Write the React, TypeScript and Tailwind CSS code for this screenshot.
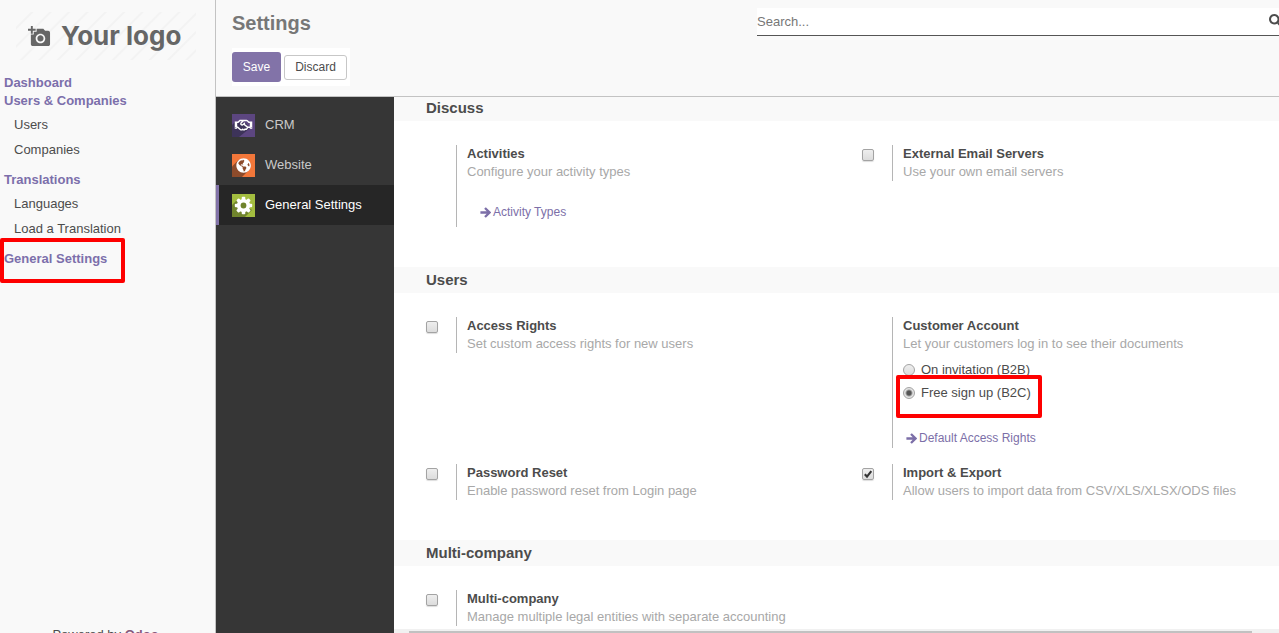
import type { ReactNode } from "react";
import { FaGlobeAmericas, FaRegHandshake, FaSearch } from "react-icons/fa";
import { MdAddAPhoto } from "react-icons/md";

type NavGroup = { title: string; items: string[]; highlighted?: boolean };

const navGroups: NavGroup[] = [
  { title: "Dashboard", items: [] },
  { title: "Users & Companies", items: ["Users", "Companies"] },
  { title: "Translations", items: ["Languages", "Load a Translation"] },
  { title: "General Settings", items: [], highlighted: true },
];

function Sidebar() {
  return (
    <aside className="flex w-[216px] shrink-0 flex-col border-r border-[#c3c3c3] bg-[#f9f9f9]">
      <a
        href="#home"
        className="mt-3 ml-4 flex h-12 w-[180px] items-center gap-[10px] bg-[repeating-linear-gradient(135deg,#f9f9f9_0px,#f9f9f9_10px,#f3f3f3_11px,#f3f3f3_12px,#f9f9f9_13px)] pl-3 text-[#666]"
      >
        <MdAddAPhoto className="size-[23px] shrink-0" />
        <span className="font-[family-name:Inter] text-[26px] leading-none font-bold whitespace-nowrap">
          Your logo
        </span>
      </a>
      <nav className="mt-[14px]">
        {navGroups.map((group) => (
          <section key={group.title}>
            <h2 className="relative pl-1 leading-[18px] font-bold text-[#7c6fab]">
              <a href="#group">{group.title}</a>
              {group.highlighted && (
                <span className="absolute -top-3 left-0 h-[45px] w-[125px] rounded-xs border-4 border-[#fe0000]" />
              )}
            </h2>
            {group.items.length > 0 && (
              <ul className="pt-[2px] pb-[9px]">
                {group.items.map((item) => (
                  <li key={item} className="pl-[14px] leading-[25px]">
                    <a href="#item">{item}</a>
                  </li>
                ))}
              </ul>
            )}
          </section>
        ))}
      </nav>
      <footer className="mt-auto -mb-[11px] pr-1 text-center leading-[18px]">
        Powered by{" "}
        <a href="#odoo" className="font-bold text-[#875a7b]">
          Odoo
        </a>
      </footer>
    </aside>
  );
}

function Header() {
  return (
    <header className="flex h-[97px] shrink-0 border-b border-[#c3c3c3] bg-[#f9f9f9]">
      <div className="w-[541px] shrink-0 pl-4">
        <h1 className="mt-2 text-[20px] leading-[30px] font-bold text-[#777]">Settings</h1>
        <div className="mt-[10px] flex h-[38px] w-[118px] items-center gap-[3px] bg-white text-xs">
          <button type="button" className="h-[30px] w-[49px] shrink-0 rounded-[3px] bg-[#8273a8] text-white">
            Save
          </button>
          <button
            type="button"
            className="h-[25px] w-[63px] shrink-0 rounded-[3px] border border-[#c7c7c7] bg-white text-[#4c4c4c]"
          >
            Discard
          </button>
        </div>
      </div>
      <div className="mt-2 flex h-7 grow overflow-hidden border-b border-[#555] bg-white">
        <input
          type="text"
          aria-label="Search"
          placeholder="Search..."
          className="min-w-0 grow bg-transparent outline-none placeholder:text-[#777]"
        />
        <button type="button" aria-label="Run search" className="-mr-[3px] flex shrink-0 items-center pb-[2px]">
          <FaSearch className="size-[13px]" />
        </button>
      </div>
    </header>
  );
}

function GearIcon() {
  return (
    <svg viewBox="0 0 23 23" className="size-[23px]" aria-hidden="true">
      <rect width="23" height="23" fill="#a3bd3f" />
      <path d="M5 6 0 11v12h13l7-7Z" fill="#70842d" />
      <g fill="#fff">
        {[0, 45, 90, 135].map((angle) => (
          <rect key={angle} x="9.7" y="2.8" width="3.6" height="17.4" rx="1" transform={`rotate(${angle} 11.5 11.5)`} />
        ))}
        <circle cx="11.5" cy="11.5" r="6.6" />
      </g>
      <circle cx="11.5" cy="11.5" r="2.9" fill="#70842d" />
    </svg>
  );
}

function WebsiteIcon() {
  return (
    <svg viewBox="0 0 23 23" className="size-[23px]" aria-hidden="true">
      <rect width="23" height="23" fill="#f2773a" />
      <path d="M6.5 6 0 12.5V23h10l7-7Z" fill="#8d4b2b" />
      <circle cx="11.6" cy="11.6" r="7" fill="#8d4b2b" />
      <FaGlobeAmericas x="4.1" y="4.1" size={15} color="#fff" />
    </svg>
  );
}

function CrmIcon() {
  return (
    <svg viewBox="0 0 23 23" className="size-[23px]" aria-hidden="true">
      <rect width="23" height="23" fill="#5c4680" />
      <path d="M3 8 0 11v12h7l10-8-3-6Z" fill="#3d3359" />
      <FaRegHandshake x="2.5" y="2.2" size={18} color="#fff" />
    </svg>
  );
}

const apps: { name: string; icon: ReactNode; active?: boolean }[] = [
  { name: "CRM", icon: <CrmIcon /> },
  { name: "Website", icon: <WebsiteIcon /> },
  { name: "General Settings", icon: <GearIcon />, active: true },
];

function AppTabs() {
  return (
    <nav className="w-[178px] shrink-0 bg-[#363636] pt-2">
      {apps.map((app) => (
        <a
          key={app.name}
          href="#app"
          className={
            app.active
              ? "flex h-10 items-center gap-[10px] border-l-[3px] border-[#8273a8] bg-[#262626] pl-[13px] text-white"
              : "flex h-10 items-center gap-[10px] border-l-[3px] border-transparent pl-[13px] text-[#c9c9c9]"
          }
        >
          {app.icon}
          <span>{app.name}</span>
        </a>
      ))}
    </nav>
  );
}

function Section({ title, children }: { title: string; children: ReactNode }) {
  return (
    <section>
      <h2 className="bg-[#f9f9f9] pl-8 text-[15px] leading-[26px] font-bold">{title}</h2>
      <div className="grid grid-cols-[436px_minmax(0,1fr)] items-start gap-y-4 pt-6 pb-10 pl-8">{children}</div>
    </section>
  );
}

type SettingProps = {
  id: string;
  title: string;
  text: string;
  toggle?: boolean;
  checked?: boolean;
  children?: ReactNode;
};

function Setting({ id, title, text, toggle = true, checked, children }: SettingProps) {
  return (
    <div className="flex">
      <div className="w-[30px] shrink-0 pt-1">
        {toggle && (
          <div className="relative size-3">
            <input
              id={id}
              type="checkbox"
              defaultChecked={checked}
              className="peer block size-3 appearance-none rounded-[2px] border border-[#a3a3a3] bg-linear-to-b from-[#eee] to-[#dcdcdc] shadow-[0_1px_1px_#ddd]"
            />
            <svg
              viewBox="0 0 12 12"
              className="pointer-events-none absolute inset-0 hidden size-3 peer-checked:block"
              aria-hidden="true"
            >
              <path d="M2.8 6.3 5 8.6 9.3 3.2" fill="none" stroke="#333" strokeWidth="2.1" />
            </svg>
          </div>
        )}
      </div>
      <div className="min-w-0 grow border-l border-[#b5b5b5] pl-[10px] leading-[18px] whitespace-nowrap">
        <label htmlFor={toggle ? id : undefined} className="block font-bold">
          {title}
        </label>
        <p className="text-[#a8a8a8]">{text}</p>
        {children}
      </div>
    </div>
  );
}

function ArrowLink({ children }: { children: string }) {
  return (
    <a href="#open" className="inline-flex items-center gap-[2px] text-xs leading-[18px] text-[#7c6fa8]">
      <svg viewBox="0 0 11 11" className="size-[11px]" fill="none" stroke="currentColor" aria-hidden="true">
        <path d="M0.4 5.5H9M5 1l4.5 4.5L5 10" strokeWidth="2.3" />
      </svg>
      {children}
    </a>
  );
}

function AccountOption({ label, checked, highlighted }: { label: string; checked?: boolean; highlighted?: boolean }) {
  return (
    <label className="relative flex h-[23px] items-center gap-[6px]">
      <input
        type="radio"
        name="customer-account"
        defaultChecked={checked}
        className="size-3 appearance-none rounded-full border border-[#a3a3a3] bg-linear-to-b from-[#eee] to-[#dcdcdc] checked:bg-[radial-gradient(circle,#555_0px,#555_2px,#e4e4e4_4px)]"
      />
      {label}
      {highlighted && (
        <span className="absolute -top-[6px] -left-[7px] h-[43px] w-[146px] rounded-xs border-4 border-[#fe0000]" />
      )}
    </label>
  );
}

function SettingsPanel() {
  return (
    <main className="flex min-w-0 grow flex-col bg-white">
      <div className="min-h-0 grow overflow-hidden">
        <div className="-mt-[2px]">
          <Section title="Discuss">
            <Setting id="activities" title="Activities" text="Configure your activity types" toggle={false}>
              <div className="flex pt-[22px] pb-[6px] pl-[13px]">
                <ArrowLink>Activity Types</ArrowLink>
              </div>
            </Setting>
            <Setting id="email-servers" title="External Email Servers" text="Use your own email servers" />
          </Section>
          <Section title="Users">
            <Setting id="access-rights" title="Access Rights" text="Set custom access rights for new users" />
            <Setting
              id="customer-account"
              title="Customer Account"
              text="Let your customers log in to see their documents"
              toggle={false}
            >
              <div className="pt-[5px]">
                <AccountOption label="On invitation (B2B)" />
                <AccountOption label="Free sign up (B2C)" checked highlighted />
              </div>
              <div className="flex pt-[25px] pb-px pl-[3px]">
                <ArrowLink>Default Access Rights</ArrowLink>
              </div>
            </Setting>
            <Setting id="password-reset" title="Password Reset" text="Enable password reset from Login page" />
            <Setting
              id="import-export"
              title="Import & Export"
              text="Allow users to import data from CSV/XLS/XLSX/ODS files"
              checked
            />
          </Section>
          <Section title="Multi-company">
            <Setting
              id="multi-company"
              title="Multi-company"
              text="Manage multiple legal entities with separate accounting"
            />
          </Section>
        </div>
      </div>
      <div className="h-1 shrink-0 bg-[#f1f1f1] pt-[2px] pr-[27px] pl-[15px]">
        <div className="h-[2px] bg-[#c1c1c1]" />
      </div>
    </main>
  );
}

export default function App() {
  return (
    <div className="flex h-screen overflow-hidden bg-white font-['Liberation_Sans',Arial,sans-serif] text-[13px] text-[#4c4c4c]">
      <Sidebar />
      <div className="flex min-w-0 grow flex-col">
        <Header />
        <div className="flex min-h-0 grow">
          <AppTabs />
          <SettingsPanel />
        </div>
      </div>
    </div>
  );
}
